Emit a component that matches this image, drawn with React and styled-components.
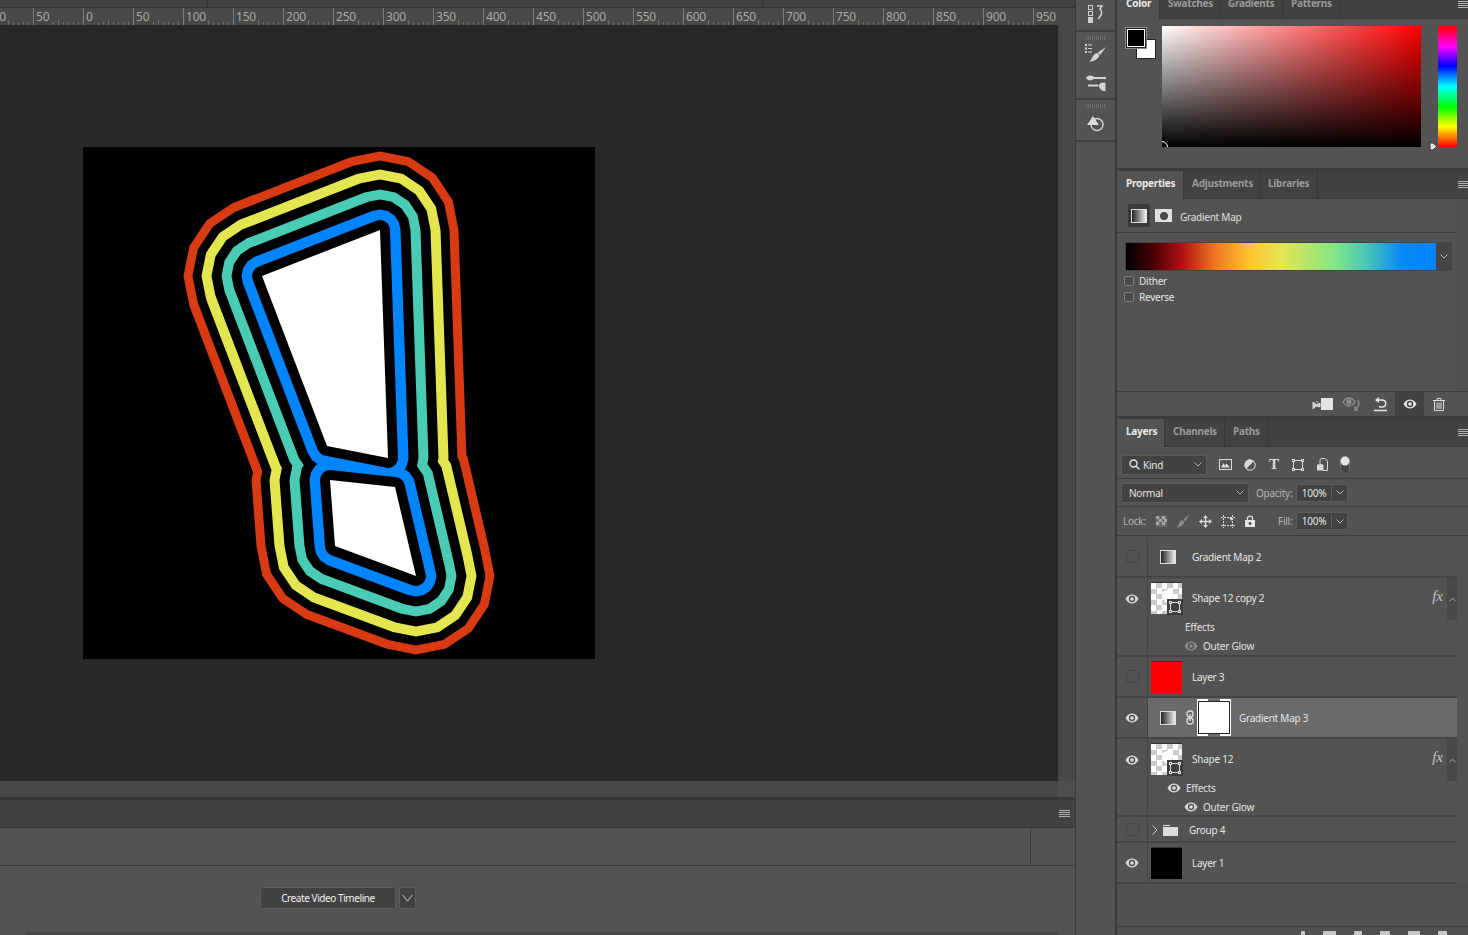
import React from "react";
import styled, { createGlobalStyle } from "styled-components";

const GlobalStyle = createGlobalStyle`
  html, body {
    margin: 0;
    height: 100%;
    overflow: hidden;
    background: #535353;
  }
  * { box-sizing: border-box; }
`;

const Root = styled.div`
  display: grid;
  grid-template-columns: 1075px 40px 353px;
  width: 1468px;
  height: 935px;
  overflow: hidden;
  background: #535353;
  color: #e4e4e4;
  font-family: "Noto Sans", "Liberation Sans", sans-serif;
  font-size: 10px;
  letter-spacing: -0.25px;
`;

/* ---------- left side: document + timeline ---------- */
const LeftColumn = styled.div`
  display: flex;
  flex-direction: column;
  min-width: 0;
`;
const TopStrip = styled.div`
  display: flex;
  height: 8px;
  background: #424242;
  border-bottom: 1px solid #333;
`;
const TopCell = styled.div`
  width: ${(p) => p.$w}px;
  border-right: 1px solid #333;
`;
const RulerRow = styled.div`
  display: flex;
  height: 17px;
  background: #484848;
  overflow: hidden;
`;
const Ruler = styled.div`
  display: flex;
  width: 1058px;
  overflow: hidden;
`;
const RulerCell = styled.div`
  flex: 0 0 50px;
  font-size: 12px;
  line-height: 17px;
  color: #a8a8a8;
  letter-spacing: -0.2px;
  border-left: 1px solid #7c7c7c;
  margin-left: ${(p) => (p.$first ? "-17px" : "0")};
  background:
    repeating-linear-gradient(to right, #707070 0 1px, transparent 1px 5px) -1px bottom / 100% 3px no-repeat,
    repeating-linear-gradient(to right, transparent 0 24px, #707070 24px 25px) left bottom / 100% 5px no-repeat;
`;
const RulerLabel = styled.span`
  display: inline-block;
  height: 17px;
  padding: 0 1px 0 2px;
  background: #484848;
`;
const CanvasRow = styled.div`
  display: flex;
  height: 756px;
`;
const Canvas = styled.div`
  width: 1058px;
  padding: 122px 0 0 83px;
  background: #282828;
`;
const Artwork = styled.svg`
  display: block;
  width: 512px;
  height: 512px;
  background: #000;
`;
const VScroll = styled.div`
  flex: 1;
  background: #484848;
`;
const HScroll = styled.div`
  height: 16px;
  background: linear-gradient(to right, #484848 1058px, #4e4e4e 1058px);
`;
const Divider = styled.div`
  height: 3px;
  background: #383838;
`;
const TimelineHead = styled.div`
  display: flex;
  justify-content: flex-end;
  align-items: center;
  height: 28px;
  padding-right: 5px;
  background: #424242;
  border-bottom: 1px solid #353535;
`;
const TimelineRow = styled.div`
  height: 38px;
  border-bottom: 1px solid #3c3c3c;
`;
const TimelineCell = styled.div`
  width: 1031px;
  height: 100%;
  border-right: 1px solid #3c3c3c;
`;
const TimelineBody = styled.div`
  flex: 1;
  display: flex;
  flex-direction: column;
  justify-content: space-between;
  padding-top: 21px;
`;
const ButtonRow = styled.div`
  display: flex;
  gap: 3px;
  padding-left: 260px;
`;
const CreateButton = styled.button`
  width: ${(p) => p.$w}px;
  height: 22px;
  padding: 0;
  display: flex;
  align-items: center;
  justify-content: center;
  background: #424242;
  border: 1px solid #5d5d5d;
  border-radius: 2px;
  color: #f0f0f0;
  font-family: inherit;
  font-size: 10px;
  letter-spacing: -0.42px;
`;
const BottomStrip = styled.div`
  height: 3px;
  width: 1032px;
  margin-left: 26px;
  background: #4a4a4a;
`;

/* ---------- icon dock ---------- */
const Dock = styled.div`
  display: flex;
  flex-direction: column;
  border-left: 1px solid #3a3a3a;
`;
const DockGroup = styled.div`
  display: flex;
  flex-direction: column;
  align-items: center;
  gap: ${(p) => p.$gap || 0}px;
  height: ${(p) => p.$h}px;
  padding-top: ${(p) => p.$pad}px;
  border-bottom: 2px solid #3e3e3e;
`;
const Grip = styled.div`
  flex: none;
  width: 20px;
  height: 4px;
  margin-bottom: ${(p) => p.$mb}px;
  background: repeating-linear-gradient(to right, #6d6d6d 0 1px, transparent 1px 2px);
`;

/* ---------- right panels ---------- */
const Panels = styled.div`
  display: flex;
  flex-direction: column;
  border-left: 2px solid #3a3a3a;
  min-width: 0;
`;
const TabBar = styled.div`
  display: flex;
  flex: none;
  align-items: stretch;
  height: 28px;
  margin-top: ${(p) => (p.$cropped ? "-9px" : "0")};
  background: #424242;
  border-bottom: 1px solid #373737;
`;
const Tab = styled.div`
  width: ${(p) => p.$w}px;
  padding-left: ${(p) => (p.$active ? 9 : 8)}px;
  line-height: 25px;
  font-weight: 700;
  font-size: 10px;
  letter-spacing: -0.25px;
  white-space: nowrap;
  color: ${(p) => (p.$active ? "#e8e8e8" : "#9a9a9a")};
  background: ${(p) => (p.$active ? "#535353" : "transparent")};
  margin-bottom: ${(p) => (p.$active ? "-1px" : "0")};
  border-right: 1px solid #373737;
`;
const MenuLines = styled.div`
  align-self: center;
  margin-left: auto;
  width: ${(p) => p.$w || 10}px;
  height: 8px;
  background: repeating-linear-gradient(to bottom, #b0b0b0 0 1px, transparent 1px 2px);
`;
const ColorBody = styled.div`
  display: flex;
  height: 149px;
  padding-top: 7px;
`;
const Swatches = styled.div`
  position: relative;
  width: 37px;
  margin-left: 8px;
`;
const Swatch = styled.div`
  position: absolute;
  left: ${(p) => p.$x}px;
  top: ${(p) => p.$y}px;
  width: ${(p) => p.$s}px;
  height: ${(p) => p.$s}px;
  background: ${(p) => p.$color};
  border: 1px solid #222;
  outline: 1px solid ${(p) => (p.$front ? "#fff" : "transparent")};
  outline-offset: -2px;
  box-shadow: ${(p) => (p.$front ? "0 0 0 1px #8a8a8a" : "none")};
`;
const Picker = styled.div`
  position: relative;
  width: 259px;
  height: 121px;
  overflow: hidden;
  background:
    linear-gradient(to bottom, rgba(0, 0, 0, 0), #000),
    linear-gradient(to right, #fff, #f00);
`;
const PickerDot = styled.div`
  position: absolute;
  left: -6px;
  bottom: -6px;
  width: 12px;
  height: 12px;
  border: 1px solid #fff;
  border-radius: 50%;
`;
const Hue = styled.div`
  position: relative;
  width: 19px;
  height: 121px;
  margin-left: 17px;
  background: linear-gradient(
    to bottom,
    #f00 0%,
    #f0f 17%,
    #00f 33%,
    #0ff 50%,
    #0f0 67%,
    #ff0 83%,
    #f00 100%
  );
`;
const HueMarker = styled.svg`
  position: absolute;
  left: -9px;
  bottom: -4px;
`;
const PanelGap = styled.div`
  flex: none;
  height: 3px;
  background: #3c3c3c;
`;
const PropsBody = styled.div`
  display: flex;
  height: 192px;
`;
const PropsMain = styled.div`
  flex: 1;
  min-width: 0;
`;
const PropsHeader = styled.div`
  display: flex;
  align-items: center;
  height: 34px;
  padding-left: 11px;
  margin-right: -11px;
  border-bottom: 1px solid #3e3e3e;
`;
const IconBox = styled.div`
  display: flex;
  align-items: center;
  justify-content: center;
  width: 22px;
  height: 23px;
  background: #3a3a3a;
  border-radius: 2px;
`;
const GradThumb = styled.div`
  width: ${(p) => p.$w || 16}px;
  height: ${(p) => p.$h || 14}px;
  border: 1px solid #ddd;
  background: linear-gradient(to right, #222, #eee);
`;
const MaskIcon = styled.div`
  display: flex;
  align-items: center;
  justify-content: center;
  width: 17px;
  height: 13px;
  margin-left: 5px;
  background: #e0e0e0;
  &::after {
    content: "";
    width: 8px;
    height: 8px;
    border-radius: 50%;
    background: #4a4a4a;
  }
`;
const PropsTitle = styled.span`
  margin: 2px 0 0 8px;
  color: #e0e0e0;
`;
const GradientPick = styled.div`
  display: flex;
  width: 327px;
  height: 29px;
  margin: 9px 0 2px 8px;
  border: 1px solid #444;
`;
const GradientBar = styled.div`
  flex: 1;
  background: linear-gradient(
    to right,
    #000 0%,
    #4a0006 9%,
    #b00f12 18%,
    #f07a22 29%,
    #ffc52e 40%,
    #e4e650 50%,
    #7fe588 68%,
    #46c4bb 78%,
    #0a88f8 89%,
    #0084ff 100%
  );
`;
const CaretBox = styled.div`
  display: flex;
  align-items: center;
  justify-content: center;
  flex: none;
  width: ${(p) => p.$w}px;
  height: 100%;
  background: ${(p) => p.$bg || "#424242"};
`;
const CheckRow = styled.label`
  display: flex;
  align-items: center;
  gap: 5px;
  height: 16px;
  padding-left: 7px;
`;
const CheckBox = styled.span`
  width: 10px;
  height: 10px;
  border: 1px solid #808080;
  border-radius: 2px;
  background: #484848;
`;
const Gutter = styled.div`
  flex: none;
  width: 11px;
  background: #505050;
`;
const PropsFooter = styled.div`
  display: flex;
  justify-content: flex-end;
  flex: none;
  height: 25px;
  padding-right: 15px;
  border-top: 1px solid #3e3e3e;
`;
const FootSlot = styled.div`
  display: flex;
  align-items: center;
  justify-content: center;
  width: 29px;
  background: ${(p) => (p.$active ? "#424242" : "transparent")};
`;
const ToolRow = styled.div`
  display: flex;
  flex: none;
  align-items: center;
  height: ${(p) => p.$h}px;
  padding-left: ${(p) => p.$pad || 4}px;
  padding-top: ${(p) => p.$top || 0}px;
  border-bottom: 1px solid #3e3e3e;
`;
const Select = styled.div`
  display: flex;
  align-items: center;
  justify-content: space-between;
  width: ${(p) => p.$w}px;
  height: 20px;
  padding: 0 4px 0 ${(p) => p.$pad}px;
  background: #424242;
  border: 1px solid #5c5c5c;
  border-radius: 2px;
`;
const SelectLabel = styled.span`
  display: flex;
  align-items: center;
  gap: 3px;
`;
const ToolSlot = styled.div`
  display: flex;
  align-items: center;
  justify-content: center;
  width: ${(p) => p.$w}px;
`;
const TypeGlyph = styled.span`
  font-family: "Liberation Serif", serif;
  font-weight: 700;
  font-size: 15px;
  line-height: 1;
  color: #d8d8d8;
`;
const FieldLabel = styled.span`
  width: ${(p) => p.$w}px;
  margin-left: ${(p) => p.$ml || 0}px;
  color: #b4b4b4;
  white-space: nowrap;
`;
const ValueBox = styled.div`
  display: flex;
  align-items: center;
  width: 52px;
  height: 18px;
  background: #424242;
  border: 1px solid #5c5c5c;
  border-radius: 2px;
`;
const ValueText = styled.span`
  flex: 1;
  text-align: center;
  border-right: 1px solid #5c5c5c;
`;

/* ---------- layer list ---------- */
const LayerList = styled.div`
  display: flex;
  flex-direction: column;
  flex: 1;
  min-height: 0;
  margin-top: 1px;
  padding-right: 11px;
`;
const LayerRow = styled.div`
  display: flex;
  flex: none;
  height: ${(p) => p.$h}px;
  border-bottom: 2px solid #454545;
`;
const EyeCell = styled.div`
  display: flex;
  align-items: ${(p) => (p.$top ? "flex-start" : "center")};
  justify-content: center;
  flex: none;
  width: 31px;
  padding-top: ${(p) => (p.$top ? "16px" : "0")};
  border-right: 1px solid #454545;
`;
const Hidden = styled.div`
  width: 13px;
  height: 13px;
  border: 1px solid #484848;
`;
const LayerBody = styled.div`
  position: relative;
  flex: 1;
  min-width: 0;
  background: ${(p) => (p.$selected ? "#6a6a6a" : "transparent")};
`;
const LayerHead = styled.div`
  display: flex;
  align-items: center;
  height: ${(p) => p.$h || 39}px;
  padding-left: ${(p) => p.$pad || 3}px;
`;
const Thumb = styled.div`
  position: relative;
  flex: none;
  width: 31px;
  height: 32px;
  background: ${(p) => p.$color || "repeating-conic-gradient(#cccccc 0 25%, #fff 0 50%) 0 0 / 11px 11px"};
  border-top: 1px solid #333;
`;
const ThumbShape = styled.svg`
  position: absolute;
  left: 0;
  top: 0;
`;
const Badge = styled.div`
  position: absolute;
  right: -1px;
  bottom: -1px;
  display: flex;
  align-items: center;
  justify-content: center;
  width: 16px;
  height: 16px;
  background: #3e3e3e;
`;
const LayerName = styled.span`
  margin-left: ${(p) => p.$ml}px;
  color: #e6e6e6;
  white-space: nowrap;
`;
const FxMark = styled.span`
  position: absolute;
  right: 14px;
  top: 10px;
  font-family: "Liberation Serif", serif;
  font-style: italic;
  font-size: 15px;
  letter-spacing: 0;
  color: #c4c4c4;
`;
const Collapse = styled.div`
  position: absolute;
  right: 0;
  top: 0;
  display: flex;
  align-items: center;
  justify-content: center;
  width: 10px;
  height: 42px;
  background: #484848;
`;
const EffectLine = styled.div`
  display: flex;
  align-items: center;
  gap: 5px;
  height: 19px;
  padding-left: ${(p) => p.$pad}px;
  margin-top: ${(p) => p.$mt || 0}px;
  color: #e0e0e0;
`;
const AdjSlot = styled.div`
  display: flex;
  justify-content: center;
  flex: none;
  width: 33px;
`;
const ChainIcon = styled.svg`
  flex: none;
  margin-left: 2px;
`;
const MaskFrame = styled.div`
  display: flex;
  align-items: center;
  justify-content: center;
  flex: none;
  width: 34px;
  height: 37px;
  margin-left: 3px;
  --c: #fff;
  background:
    linear-gradient(var(--c), var(--c)) 0 0 / 11px 2px no-repeat,
    linear-gradient(var(--c), var(--c)) 100% 0 / 11px 2px no-repeat,
    linear-gradient(var(--c), var(--c)) 0 100% / 11px 2px no-repeat,
    linear-gradient(var(--c), var(--c)) 100% 100% / 11px 2px no-repeat,
    linear-gradient(var(--c), var(--c)) 0 0 / 2px 100% no-repeat,
    linear-gradient(var(--c), var(--c)) 100% 0 / 2px 100% no-repeat;
`;
const MaskThumb = styled.div`
  width: 32px;
  height: 33px;
  background: #fff;
  border: 1px solid #222;
`;
const FolderIcon = styled.svg`
  flex: none;
  margin-left: 5px;
`;
const ListFill = styled.div`
  flex: 1;
  margin-right: -11px;
  background: #505050;
`;
const LayersFooter = styled.div`
  display: flex;
  flex: none;
  gap: 18px;
  justify-content: flex-end;
  height: 9px;
  padding: 4px 21px 0 0;
  background: #505050;
  border-top: 1px solid #3e3e3e;
  overflow: hidden;
`;
const FootStub = styled.div`
  width: ${(p) => p.$w}px;
  height: 6px;
  background: #c8c8c8;
  border-radius: 1px 1px 0 0;
`;

/* ---------- drawings ---------- */
const SHAPES = [
  [[297, 83], [179, 129], [244, 299], [305, 311]],
  [[247, 333], [312, 340], [333, 429], [252, 399]],
];
// the glow rings are faceted: the shape grown by a 16-sided polygon
const GON = Array.from({ length: 16 }, (_, i) => [Math.sin((i * Math.PI) / 8), -Math.cos((i * Math.PI) / 8)]);
const ART_LAYERS = [
  [78.5, "#d83a14"],
  [69.5, "#000"],
  [60.5, "#e4e650"],
  [50.5, "#000"],
  [40.5, "#4accb4"],
  [30.5, "#000"],
  [20.5, "#0084ff"],
  [10, "#000"],
  [0, "#fff"],
];

const subPath = (pts) => {
  const area = pts.reduce((sum, [x, y], i) => {
    const [nx, ny] = pts[(i + 1) % pts.length];
    return sum + x * ny - nx * y;
  }, 0);
  const list = area < 0 ? [...pts].reverse() : pts;
  return "M" + list.map(([x, y]) => `${x.toFixed(2)} ${y.toFixed(2)}`).join("L") + "Z";
};

const grownPath = (r) => {
  let d = "";
  SHAPES.forEach((poly) => {
    d += subPath(poly);
    if (r === 0) return;
    poly.forEach((p, i) => {
      const q = poly[(i + 1) % poly.length];
      const nx = q[1] - p[1];
      const ny = p[0] - q[0];
      const [vx, vy] = GON.reduce((best, g) =>
        g[0] * nx + g[1] * ny > best[0] * nx + best[1] * ny ? g : best
      );
      d += subPath(GON.map(([x, y]) => [p[0] + x * r, p[1] + y * r]));
      d += subPath([
        [p[0] + vx * r, p[1] + vy * r],
        [q[0] + vx * r, q[1] + vy * r],
        [q[0] - vx * r, q[1] - vy * r],
        [p[0] - vx * r, p[1] - vy * r],
      ]);
    });
  });
  return d;
};

const RULER = [100, 50, 0, 50, 100, 150, 200, 250, 300, 350, 400, 450, 500, 550, 600, 650, 700, 750, 800, 850, 900, 950];

const Chevron = ({ color = "#b8b8b8", w = 8, h = 5 }) => (
  <svg width={w} height={h} viewBox="0 0 8 5" fill="none" stroke={color} preserveAspectRatio="none">
    <path d="M.5 .5L4 4L7.500 .5" vectorEffect="non-scaling-stroke" />
  </svg>
);

const Eye = ({ color = "#dcdcdc", bg = "#535353" }) => (
  <svg width="14" height="10" viewBox="0 0 14 10">
    <path d="M.5 5C2.500 1.500 4.800 .5 7 .5S11.500 1.500 13.500 5C11.500 8.500 9.200 9.500 7 9.500S2.500 8.500 .5 5Z" fill={color} />
    <circle cx="7" cy="5" r="3.200" fill={bg} />
    <circle cx="7" cy="5" r="1.800" fill={color} />
  </svg>
);

const TransformIcon = ({ s = 12 }) => (
  <svg width={s} height={s} viewBox="0 0 12 12" fill="none" stroke="#dcdcdc">
    <rect x="1.500" y="1.500" width="9" height="9" />
    <g fill="#3e3e3e">
      <rect x=".5" y=".5" width="2" height="2" />
      <rect x="9.500" y=".5" width="2" height="2" />
      <rect x=".5" y="9.500" width="2" height="2" />
      <rect x="9.500" y="9.500" width="2" height="2" />
    </g>
  </svg>
);

const BrushIcon = ({ color = "#d8d8d8", s = 14 }) => (
  <svg width={s} height={s} viewBox="0 0 14 14" fill={color}>
    <path d="M13.500 .5L7.500 5.500L9 7.500Z" />
    <path d="M6.700 6.300L8.200 8.200C7.500 11 4 13.500 .5 13.500C2.500 12 2.800 10.800 3.300 9.300C3.800 7.800 5.300 6.500 6.700 6.300Z" />
  </svg>
);

const ShapeThumb = () => (
  <Thumb>
    <ThumbShape width="31" height="31" viewBox="0 0 31 31">
      <path d="M18 6L11 9L14 19L20 20L22 12Z" fill="#fff" />
    </ThumbShape>
    <Badge>
      <TransformIcon />
    </Badge>
  </Thumb>
);

const FxControls = () => (
  <>
    <FxMark>fx</FxMark>
    <Collapse>
      <svg width="7" height="5" viewBox="0 0 8 5" fill="none" stroke="#b8b8b8">
        <path d="M.5 4.500L4 1L7.500 4.500" />
      </svg>
    </Collapse>
  </>
);

const App = () => {
  return (
    <Root>
      <GlobalStyle />
      <LeftColumn>
        <TopStrip>
          <TopCell $w={208} />
          <TopCell $w={555} />
        </TopStrip>
        <RulerRow>
          <Ruler>
            {RULER.map((n, i) => (
              <RulerCell key={i} $first={i === 0}>
                <RulerLabel>{n}</RulerLabel>
              </RulerCell>
            ))}
          </Ruler>
        </RulerRow>
        <CanvasRow>
          <Canvas>
            <Artwork viewBox="0 0 512 512">
              {ART_LAYERS.map(([r, color]) => (
                <path key={r} d={grownPath(r)} fill={color} />
              ))}
            </Artwork>
          </Canvas>
          <VScroll />
        </CanvasRow>
        <HScroll />
        <Divider />
        <TimelineHead>
          <MenuLines $w={11} />
        </TimelineHead>
        <TimelineRow>
          <TimelineCell />
        </TimelineRow>
        <TimelineBody>
          <ButtonRow>
            <CreateButton $w={136}>Create Video Timeline</CreateButton>
            <CreateButton $w={17}>
              <Chevron color="#c4c4c4" w={11} h={9} />
            </CreateButton>
          </ButtonRow>
          <BottomStrip />
        </TimelineBody>
      </LeftColumn>

      <Dock>
        <DockGroup $h={32} $pad={5}>
          <svg width="17" height="18" viewBox="0 0 17 18" fill="none" stroke="#cfcfcf">
            <rect x="1.500" y=".5" width="4" height="4" />
            <rect x="1.500" y="6.500" width="4" height="4" />
            <rect x="1.500" y="12.500" width="4" height="5" fill="#cfcfcf" />
            <path d="M10 1H15L13 4C15 6 16 9 11 14" strokeWidth="1.500" />
          </svg>
        </DockGroup>
        <DockGroup $h={68} $pad={4} $gap={13}>
          <Grip $mb={-9} />
          <svg width="21" height="18" viewBox="0 0 21 18" fill="#d4d4d4">
            <path d="M0 0h2v2H0zM0 3.500h2v2H0zM0 7h2v2H0zM3 .5h4v1H3zM3 4h4v1H3zM3 7.500h4v1H3z" />
            <path d="M21 3L13 8.500L15 11Z" />
            <path d="M12.500 9L14.500 11.500C13.500 15 8 18 4 17.500C6.500 16 7 14 8 12C9 10 11 9 12.500 9Z" />
          </svg>
          <svg width="20" height="17" viewBox="0 0 20 17" fill="#d4d4d4">
            <path d="M0 3C2 0 5 0 8 2H20V4H8C5 6 2 6 0 3Z" />
            <path d="M2 9.500H12V11.500H2ZM12.500 10.500C13.500 8 16 7 19.500 7.500V16C16 17 13.500 13 12.500 10.500Z" />
          </svg>
        </DockGroup>
        <DockGroup $h={42} $pad={4} $gap={3}>
          <Grip $mb={4} />
          <svg width="18" height="17" viewBox="0 0 18 17">
            <circle cx="10" cy="9.500" r="6" fill="none" stroke="#d8d8d8" strokeWidth="1.300" />
            <path d="M6 1L12 10H0Z" fill="#d8d8d8" />
          </svg>
        </DockGroup>
      </Dock>

      <Panels>
        <TabBar $cropped>
          <Tab $active $w={43}>Color</Tab>
          <Tab $w={60}>Swatches</Tab>
          <Tab $w={63}>Gradients</Tab>
          <Tab $w={57}>Patterns</Tab>
          <MenuLines />
        </TabBar>
        <ColorBody>
          <Swatches>
            <Swatch $x={11} $y={13} $s={20} $color="#fff" />
            <Swatch $front $x={1} $y={2} $s={20} $color="#000" />
          </Swatches>
          <Picker>
            <PickerDot />
          </Picker>
          <Hue>
            <HueMarker width="9" height="9" viewBox="0 0 9 9">
              <path d="M1 1H4L8 4.500L4 8H1Z" fill="#e8e8e8" stroke="#333" />
            </HueMarker>
          </Hue>
        </ColorBody>
        <PanelGap />

        <TabBar>
          <Tab $active $w={67}>Properties</Tab>
          <Tab $w={76}>Adjustments</Tab>
          <Tab $w={58}>Libraries</Tab>
          <MenuLines />
        </TabBar>
        <PropsBody>
          <PropsMain>
            <PropsHeader>
              <IconBox>
                <GradThumb />
              </IconBox>
              <MaskIcon />
              <PropsTitle>Gradient Map</PropsTitle>
            </PropsHeader>
            <GradientPick>
              <GradientBar />
              <CaretBox $w={15} $bg="#454545">
                <Chevron />
              </CaretBox>
            </GradientPick>
            <CheckRow>
              <CheckBox />
              Dither
            </CheckRow>
            <CheckRow>
              <CheckBox />
              Reverse
            </CheckRow>
          </PropsMain>
          <Gutter />
        </PropsBody>
        <PropsFooter>
          <FootSlot>
            <svg width="21" height="12" viewBox="0 0 21 12">
              <rect x="9" y="0" width="12" height="12" fill="#e4e4e4" />
              <path d="M1 4L5 7L8 5V9L4 8L1 11ZM4 3L8 7" fill="#d4d4d4" stroke="#d4d4d4" />
            </svg>
          </FootSlot>
          <FootSlot>
            <svg width="19" height="14" viewBox="0 0 19 14" fill="none" stroke="#8e8e8e" strokeWidth="1.300">
              <path d="M1 5C3 2 5 1 7 1S11 2 13 5C11 8 9 9 7 9S3 8 1 5Z" />
              <circle cx="7" cy="5" r="2" fill="#8e8e8e" />
              <path d="M16 3C18 6 17 10 13 12M13 9.500V13H16" />
            </svg>
          </FootSlot>
          <FootSlot>
            <svg width="15" height="15" viewBox="0 0 15 15" fill="none" stroke="#e4e4e4" strokeWidth="1.500">
              <path d="M5 3H9C14 3 14 10 9 10H6" />
              <path d="M6 0V6L2 3Z" fill="#e4e4e4" stroke="none" />
              <path d="M1 13.500H14" />
            </svg>
          </FootSlot>
          <FootSlot $active>
            <Eye bg="#424242" color="#e8e8e8" />
          </FootSlot>
          <FootSlot>
            <svg width="12" height="13" viewBox="0 0 12 13" fill="none" stroke="#dcdcdc">
              <path d="M0 2.500H12M4 2V.5H8V2M1.500 3V12.500H10.500V3M4 4.500V11M6 4.500V11M8 4.500V11" />
            </svg>
          </FootSlot>
        </PropsFooter>
        <PanelGap />

        <TabBar>
          <Tab $active $w={48}>Layers</Tab>
          <Tab $w={60}>Channels</Tab>
          <Tab $w={43}>Paths</Tab>
          <MenuLines />
        </TabBar>
        <ToolRow $h={32} $top={4}>
          <Select $w={86} $pad={7}>
            <SelectLabel>
              <svg width="11" height="11" viewBox="0 0 11 11" fill="none" stroke="#e4e4e4" strokeWidth="1.400">
                <circle cx="4.500" cy="4.500" r="3.500" />
                <path d="M7 7L10.500 10.500" />
              </svg>
              Kind
            </SelectLabel>
            <Chevron />
          </Select>
          <ToolSlot $w={6} />
          <ToolSlot $w={24}>
            <svg width="13" height="11" viewBox="0 0 13 11" fill="none" stroke="#d8d8d8">
              <rect x=".5" y=".5" width="12" height="10" />
              <path d="M2 8.500L4.500 4L6 6.500L7.500 4.500L11 8.500Z" fill="#d8d8d8" stroke="none" />
            </svg>
          </ToolSlot>
          <ToolSlot $w={25}>
            <svg width="12" height="12" viewBox="0 0 12 12">
              <circle cx="6" cy="6" r="5.500" fill="#d8d8d8" />
              <path d="M10 2A5.500 5.500 0 0 1 2 10Z" fill="#535353" />
              <circle cx="6" cy="6" r="5.200" fill="none" stroke="#d8d8d8" />
            </svg>
          </ToolSlot>
          <ToolSlot $w={24}>
            <TypeGlyph>T</TypeGlyph>
          </ToolSlot>
          <ToolSlot $w={24}>
            <svg width="12" height="12" viewBox="0 0 12 12" fill="none" stroke="#d8d8d8">
              <rect x="1.500" y="1.500" width="9" height="9" />
              <g fill="#535353">
                <rect x=".5" y=".5" width="2" height="2" />
                <rect x="9.500" y=".5" width="2" height="2" />
                <rect x=".5" y="9.500" width="2" height="2" />
                <rect x="9.500" y="9.500" width="2" height="2" />
              </g>
            </svg>
          </ToolSlot>
          <ToolSlot $w={24}>
            <svg width="11" height="13" viewBox="0 0 11 13">
              <path d="M4.500 .5H8L10.500 3V12.500H6V7H3V1.500Z" fill="none" stroke="#d8d8d8" />
              <rect x="0" y="6.500" width="6" height="6" fill="#d8d8d8" />
            </svg>
          </ToolSlot>
          <ToolSlot $w={21}>
            <svg width="10" height="18" viewBox="0 0 10 18">
              <rect x=".5" y=".5" width="9" height="17" rx="4.500" fill="#454545" stroke="#6a6a6a" />
              <circle cx="5" cy="5" r="4.500" fill="#e4e4e4" />
            </svg>
          </ToolSlot>
        </ToolRow>
        <ToolRow $h={28}>
          <Select $w={128} $pad={7}>
            <span>Normal</span>
            <Chevron />
          </Select>
          <FieldLabel $w={40} $ml={7}>Opacity:</FieldLabel>
          <ValueBox>
            <ValueText>100%</ValueText>
            <CaretBox $w={15}>
              <Chevron />
            </CaretBox>
          </ValueBox>
        </ToolRow>
        <ToolRow $h={29} $pad={6}>
          <FieldLabel $w={27}>Lock:</FieldLabel>
          <ToolSlot $w={22}>
            <svg width="11" height="11" viewBox="0 0 11 11" fill="#a8a8a8">
              <path d="M0 0h11v11H0z" fill="#6c6c6c" />
              <path d="M0 0h3v3H0zM6 0h3v3H6zM3 3h3v3H3zM8 3h3v3H8zM0 6h3v3H0zM6 6h3v3H6z" />
            </svg>
          </ToolSlot>
          <ToolSlot $w={22}>
            <BrushIcon color="#8c8c8c" />
          </ToolSlot>
          <ToolSlot $w={22}>
            <svg width="13" height="13" viewBox="0 0 13 13" fill="#d8d8d8">
              <path d="M6.500 0L9 3H7.200V5.800H10V4L13 6.500L10 9V7.200H7.200V10H9L6.500 13L4 10H5.800V7.200H3V9L0 6.500L3 4V5.800H5.800V3H4Z" />
            </svg>
          </ToolSlot>
          <ToolSlot $w={23}>
            <svg width="14" height="13" viewBox="0 0 14 13" fill="none" stroke="#d8d8d8">
              <path d="M2.500 0V13M11.500 0V13M0 2.500H14M0 10.500H14" strokeDasharray="2 1" />
              <path d="M8 3H11V6Z" fill="#d8d8d8" stroke="none" />
            </svg>
          </ToolSlot>
          <ToolSlot $w={22}>
            <svg width="10" height="12" viewBox="0 0 10 12">
              <path d="M2.500 5V3.200C2.500 .5 7.500 .5 7.500 3.200V5" fill="none" stroke="#e4e4e4" strokeWidth="1.300" />
              <path d="M0 5H10V12H0Z" fill="#e4e4e4" />
              <circle cx="5" cy="8.500" r="1.400" fill="#535353" />
            </svg>
          </ToolSlot>
          <FieldLabel $w={18} $ml={17}>Fill:</FieldLabel>
          <ValueBox>
            <ValueText>100%</ValueText>
            <CaretBox $w={15}>
              <Chevron />
            </CaretBox>
          </ValueBox>
        </ToolRow>

        <LayerList>
          <LayerRow $h={41}>
            <EyeCell>
              <Hidden />
            </EyeCell>
            <LayerBody>
              <LayerHead>
                <AdjSlot>
                  <GradThumb />
                </AdjSlot>
                <LayerName $ml={8}>Gradient Map 2</LayerName>
              </LayerHead>
            </LayerBody>
          </LayerRow>

          <LayerRow $h={79}>
            <EyeCell $top>
              <Eye />
            </EyeCell>
            <LayerBody>
              <LayerHead $h={40}>
                <ShapeThumb />
                <LayerName $ml={10}>Shape 12 copy 2</LayerName>
              </LayerHead>
              <FxControls />
              <EffectLine $pad={37} $mt={-1}>Effects</EffectLine>
              <EffectLine $pad={36}>
                <Eye color="#8a8a8a" />
                Outer Glow
              </EffectLine>
            </LayerBody>
          </LayerRow>

          <LayerRow $h={41}>
            <EyeCell>
              <Hidden />
            </EyeCell>
            <LayerBody>
              <LayerHead>
                <Thumb $color="#f00" />
                <LayerName $ml={10}>Layer 3</LayerName>
              </LayerHead>
            </LayerBody>
          </LayerRow>

          <LayerRow $h={41}>
            <EyeCell>
              <Eye />
            </EyeCell>
            <LayerBody $selected>
              <LayerHead>
                <AdjSlot>
                  <GradThumb />
                </AdjSlot>
                <ChainIcon width="8" height="15" viewBox="0 0 8 15" fill="none" stroke="#dcdcdc" strokeWidth="1.300">
                  <rect x="1" y="1" width="6" height="6" rx="2.500" />
                  <rect x="1" y="8" width="6" height="6" rx="2.500" />
                  <path d="M4 4V11" />
                </ChainIcon>
                <MaskFrame>
                  <MaskThumb />
                </MaskFrame>
                <LayerName $ml={8}>Gradient Map 3</LayerName>
              </LayerHead>
            </LayerBody>
          </LayerRow>

          <LayerRow $h={78}>
            <EyeCell $top>
              <Eye />
            </EyeCell>
            <LayerBody>
              <LayerHead $h={40}>
                <ShapeThumb />
                <LayerName $ml={10}>Shape 12</LayerName>
              </LayerHead>
              <FxControls />
              <EffectLine $pad={19} $mt={-1}>
                <Eye />
                Effects
              </EffectLine>
              <EffectLine $pad={36}>
                <Eye />
                Outer Glow
              </EffectLine>
            </LayerBody>
          </LayerRow>

          <LayerRow $h={26}>
            <EyeCell>
              <Hidden />
            </EyeCell>
            <LayerBody>
              <LayerHead $h={26} $pad={4}>
                <svg width="6" height="10" viewBox="0 0 6 10" fill="none" stroke="#c8c8c8">
                  <path d="M.5 .5L5 5L.5 9.500" />
                </svg>
                <FolderIcon width="15" height="11" viewBox="0 0 15 11" fill="#dcdcdc">
                  <path d="M0 0H7V1H0ZM0 2H15V11H0Z" />
                </FolderIcon>
                <LayerName $ml={11}>Group 4</LayerName>
              </LayerHead>
            </LayerBody>
          </LayerRow>

          <LayerRow $h={41}>
            <EyeCell>
              <Eye />
            </EyeCell>
            <LayerBody>
              <LayerHead>
                <Thumb $color="#000" />
                <LayerName $ml={10}>Layer 1</LayerName>
              </LayerHead>
            </LayerBody>
          </LayerRow>
          <ListFill />
        </LayerList>
        <LayersFooter>
          <FootStub $w={4} />
          <FootStub $w={13} />
          <FootStub $w={8} />
          <FootStub $w={10} />
          <FootStub $w={12} />
          <FootStub $w={9} />
        </LayersFooter>
      </Panels>
    </Root>
  );
};

export default App;
